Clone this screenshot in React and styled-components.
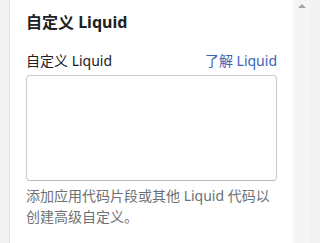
import styled, { createGlobalStyle } from "styled-components";

const GlobalStyle = createGlobalStyle`
  html, body {
    margin: 0;
    padding: 0;
    height: 100%;
    overflow: hidden;
  }
  body {
    font-family: "Noto Sans", "Noto Sans CJK SC", sans-serif;
    color: #202223;
    background: #f1f2f3;
  }
`;

const Page = styled.div`
  display: flex;
  width: 310px;
  height: 243px;
`;

const Gutter = styled.div`
  flex: 0 0 9px;
  background: #f1f2f3;
  border-right: 1px solid #e1e3e5;
`;

const Panel = styled.div`
  flex: 1;
  min-width: 0;
  background: #fff;
  padding: 10px 16px 0 16px;
  display: flex;
  flex-direction: column;
`;

const Title = styled.h2`
  margin: 0;
  font-size: 16px;
  line-height: 24px;
  font-weight: 700;
  color: #202223;
`;

const LabelRow = styled.div`
  display: flex;
  justify-content: space-between;
  align-items: center;
  margin-top: 17px;
  font-size: 14px;
  line-height: 20px;
`;

const Label = styled.label`
  color: #202223;
`;

const Link = styled.a`
  color: #3a64b6;
  text-decoration: none;
  cursor: pointer;
`;

const Editor = styled.textarea`
  margin-top: 4px;
  width: 100%;
  height: 106px;
  box-sizing: border-box;
  border: 1px solid #c9cccf;
  border-bottom-color: #b9bec2;
  border-radius: 4px;
  resize: none;
  font: inherit;
  outline: none;
`;

const HelpText = styled.p`
  margin: 4px 0 0 0;
  font-size: 14px;
  line-height: 21px;
  color: #6d7175;
`;

const Scrollbar = styled.div`
  flex: 0 0 17px;
  background: #f5f5f5;
  display: flex;
  flex-direction: column;
  align-items: center;
  padding-top: 4px;
  box-sizing: border-box;
`;

const ArrowUp = styled.div`
  width: 0;
  height: 0;
  border-left: 4px solid transparent;
  border-right: 4px solid transparent;
  border-bottom: 4px solid #a3a3a3;
`;

export default function App() {
  return (
    <>
      <GlobalStyle />
      <Page>
        <Gutter />
        <Panel>
          <Title>自定义 Liquid</Title>
          <LabelRow>
            <Label>自定义 Liquid</Label>
            <Link>了解 Liquid</Link>
          </LabelRow>
          <Editor />
          <HelpText>添加应用代码片段或其他 Liquid 代码以创建高级自定义。</HelpText>
        </Panel>
        <Scrollbar>
          <ArrowUp />
        </Scrollbar>
      </Page>
    </>
  );
}
